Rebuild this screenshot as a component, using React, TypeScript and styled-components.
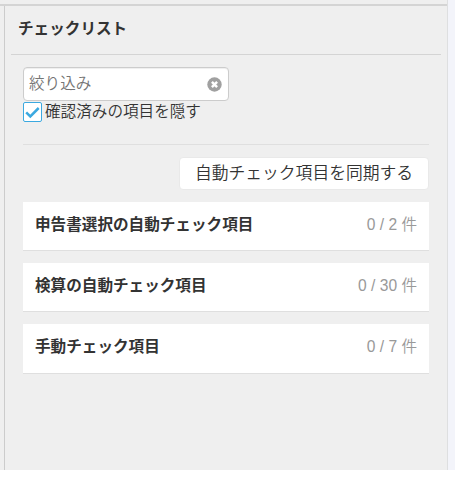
import React from "react";
import styled, { createGlobalStyle } from "styled-components";

const GlobalStyle = createGlobalStyle`
  * { box-sizing: border-box; }
  body {
    margin: 0;
    background: #fff;
    color: #333;
    font-family: "Liberation Sans", "Noto Sans CJK JP", sans-serif;
    font-size: 15.6px;
  }
`;

const Page = styled.div`
  width: 455px;
  height: 470px;
  display: flex;
  background: #f3f4fa;
`;

const Shell = styled.div`
  width: 448px;
  display: flex;
  flex-direction: column;
  background: #efefef;
  border-right: 1px solid #dedfe0;
`;

const TopBar = styled.div`
  height: 6px;
  border-bottom: 2px solid #d4d4d4;
`;

const Panel = styled.aside`
  flex: 1;
  margin-left: 4px;
  padding: 0 6px;
  border-left: 1px solid #ccc;
`;

const Title = styled.h2`
  height: 49px;
  margin: 0;
  padding: 11px 7px 0;
  border-bottom: 1px solid #d4d4d4;
  font-size: 15.6px;
  font-weight: 700;
  line-height: 24px;
`;

const Content = styled.div`
  padding: 12px 12px 0;
  display: flex;
  flex-direction: column;
`;

const SearchBox = styled.div`
  width: 206px;
  height: 34px;
  display: flex;
  align-items: center;
  padding: 0 6px 0 5px;
  background: #fff;
  border: 1px solid #ccc;
  border-radius: 4px;
  box-shadow: inset 0 1px 1px rgba(0, 0, 0, 0.07);
`;

const SearchInput = styled.input`
  flex: 1;
  min-width: 0;
  height: 30px;
  padding: 0;
  border: 0;
  outline: 0;
  background: transparent;
  font: inherit;
  font-weight: 350;
  &::placeholder { color: #757575; opacity: 1; }
`;

const ClearButton = styled.button`
  width: 15px;
  height: 15px;
  display: flex;
  padding: 0;
  border: 0;
  background: none;
`;

const HideRow = styled.label`
  height: 21px;
  margin-top: 1px;
  display: flex;
  gap: 3px;
  font-weight: 350;
  line-height: 19px;
  white-space: nowrap;
`;

const Checkbox = styled.span`
  width: 19px;
  height: 20px;
  display: flex;
  align-items: center;
  justify-content: center;
  background: #fff;
  border: 1px solid #3ba9e0;
  border-radius: 2px;
`;

const Divider = styled.hr`
  width: 100%;
  height: 1px;
  margin: 21px 0 12px;
  border: 0;
  background: #dfdfdf;
`;

const SyncButton = styled.button`
  width: 250px;
  height: 33px;
  align-self: flex-end;
  padding: 0;
  background: #fff;
  border: 1px solid #e9e9e9;
  border-radius: 4px;
  color: #333;
  font: inherit;
  font-size: 16.8px;
  font-weight: 350;
  line-height: 30px;
`;

const CardList = styled.ul`
  margin: 12px 0 0;
  padding: 0;
  list-style: none;
  display: grid;
  grid-template-rows: 49px 49px 50px;
  row-gap: 12px;
`;

const Card = styled.li`
  display: flex;
  justify-content: space-between;
  padding: 11px 12px 0;
  background: #fff;
  border-bottom: 1px solid #dfdfdf;
  line-height: 24px;
`;

const CardTitle = styled.span`
  font-weight: 700;
`;

const Count = styled.span`
  color: #999;
  font-size: 15.6px;
  font-weight: 350;
`;

const items = [
  { title: "申告書選択の自動チェック項目", total: 2 },
  { title: "検算の自動チェック項目", total: 30 },
  { title: "手動チェック項目", total: 7 },
];

export default function App() {
  return (
    <>
      <GlobalStyle />
      <Page>
        <Shell>
          <TopBar />
          <Panel>
            <Title>チェックリスト</Title>
            <Content>
              <SearchBox>
                <SearchInput placeholder="絞り込み" />
                <ClearButton aria-label="クリア">
                  <svg width="15" height="15" viewBox="0 0 15 15">
                    <circle cx="7.5" cy="7.5" r="7.2" fill="#a0a0a0" />
                    <path d="M4.9 4.9 10.1 10.1M10.1 4.9 4.9 10.1" stroke="#fff" strokeWidth="2.5" />
                  </svg>
                </ClearButton>
              </SearchBox>
              <HideRow>
                <Checkbox role="checkbox" aria-checked="true">
                  <svg width="15" height="14" viewBox="0 0 15 14">
                    <path d="M1.2 7.3 5.3 11.4 13.7 3" fill="none" stroke="#3ba9e0" strokeWidth="2.5" />
                  </svg>
                </Checkbox>
                <span>確認済みの項目を隠す</span>
              </HideRow>
              <Divider />
              <SyncButton>自動チェック項目を同期する</SyncButton>
              <CardList>
                {items.map((item) => (
                  <Card key={item.title}>
                    <CardTitle>{item.title}</CardTitle>
                    <Count>{`0 / ${item.total} 件`}</Count>
                  </Card>
                ))}
              </CardList>
            </Content>
          </Panel>
        </Shell>
      </Page>
    </>
  );
}
